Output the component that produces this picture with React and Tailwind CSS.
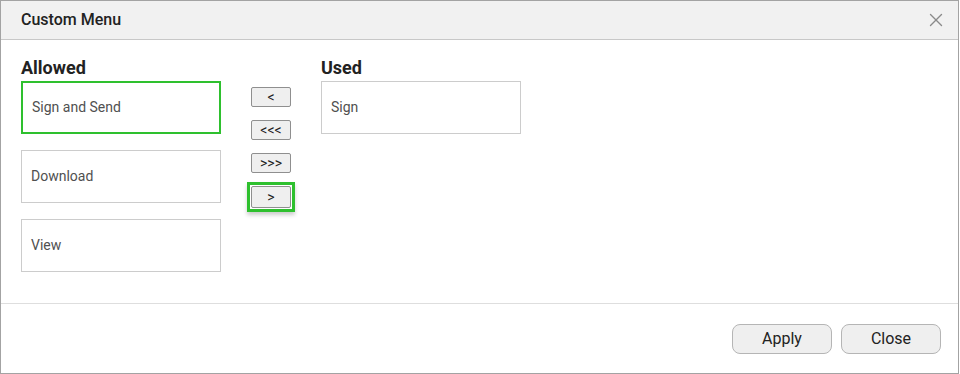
import { X } from 'lucide-react'

const allowed = ['Sign and Send', 'Download', 'View']
const used = ['Sign']
const moves = ['<', '<<<', '>>>', '>']

function Item({ label, selected }) {
  return (
    <div
      className={
        'flex h-[53px] w-[200px] items-center px-[9px] text-[14px] text-[#505050] ' +
        (selected ? 'border-2 border-[#2ec02e] px-[8px]' : 'border border-[#cccccc]')
      }
    >
      {label}
    </div>
  )
}

export default function App() {
  return (
    <div
      className="flex h-[374px] w-[959px] flex-col border border-[#a3a3a3] bg-white"
      style={{ fontFamily: 'Roboto, "Liberation Sans", sans-serif' }}
    >
      <div className="flex h-[39px] shrink-0 items-center justify-between border-b border-[#c8c8c8] bg-[#f1f1f1] pl-[20px] pr-[11px]">
        <span className="text-[16px] font-medium text-[#222]">Custom Menu</span>
        <X size={22} strokeWidth={1.5} className="text-[#8a8a8a]" />
      </div>

      <div className="flex flex-1 gap-[26px] pl-[20px] pt-[18px]">
        <div className="flex flex-col">
          <h3 className="h-[23px] text-[18px] leading-[20px] font-bold text-[#222]">Allowed</h3>
          <div className="flex flex-col gap-[16px]">
            {allowed.map((a, i) => (
              <Item key={a} label={a} selected={i === 0} />
            ))}
          </div>
        </div>

        <div className="flex w-[48px] flex-col items-center gap-[13px] pt-[29px]">
          {moves.map((m) =>
            m === '>' ? (
              <div
                key={m}
                className="-mt-[4px] border-[3px] border-[#2ec02e] p-[1px] shadow-[0_3px_4px_rgba(0,0,0,0.2)]"
              >
                <button className="flex h-[22px] w-[40px] items-center justify-center rounded-[2px] border border-[#8f8f8f] bg-[#efefef] text-[14px] text-[#222]">
                  {m}
                </button>
              </div>
            ) : (
              <button
                key={m}
                className="flex h-[20px] w-[40px] items-center justify-center rounded-[2px] border border-[#8f8f8f] bg-[#efefef] text-[14px] text-[#222]"
              >
                {m}
              </button>
            )
          )}
        </div>

        <div className="flex flex-col">
          <h3 className="h-[23px] text-[18px] leading-[20px] font-bold text-[#222]">Used</h3>
          <div className="flex flex-col gap-[16px]">
            {used.map((u) => (
              <Item key={u} label={u} />
            ))}
          </div>
        </div>
      </div>

      <div className="flex h-[70px] shrink-0 items-center justify-end gap-[9px] border-t border-[#dedede] pr-[17px] pt-[1px]">
        <button className="h-[30px] w-[100px] rounded-[8px] border border-[#b5b5b5] bg-[#efefef] text-[16px] text-[#222]">
          Apply
        </button>
        <button className="h-[30px] w-[100px] rounded-[8px] border border-[#b5b5b5] bg-[#efefef] text-[16px] text-[#222]">
          Close
        </button>
      </div>
    </div>
  )
}
